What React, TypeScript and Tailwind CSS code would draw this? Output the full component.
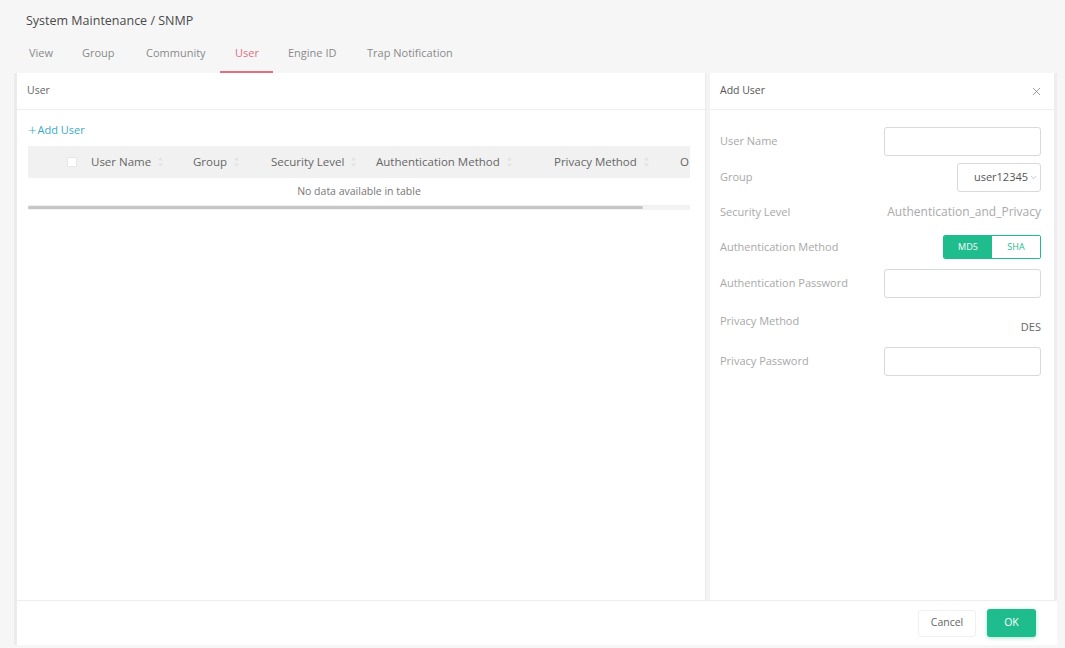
import { X, ChevronDown } from "lucide-react";

const tabs = [
  { name: "View", w: "w-[53px]" },
  { name: "Group", w: "w-[64px]" },
  { name: "Community", w: "w-[74px]" },
  { name: "User", w: "w-[53px] mr-[15px]" },
  { name: "Engine ID", w: "w-[79px]" },
  { name: "Trap Notification", w: "" },
];

const columns = [
  { name: "User Name", w: "w-[102px]" },
  { name: "Group", w: "w-[78px]" },
  { name: "Security Level", w: "w-[105px]" },
  { name: "Authentication Method", w: "w-[178px]" },
  { name: "Privacy Method", w: "w-[126px]" },
];

const SortIcon = () => (
  <svg width="5" height="10" viewBox="0 0 5 10" className="ml-[7px]">
    <path d="M2.5 0 L5 3.5 H0 Z" fill="#e3e3e3" />
    <path d="M2.5 10 L5 6.5 H0 Z" fill="#e3e3e3" />
  </svg>
);

const Input = ({ w = "w-[157px]" }: { w?: string }) => (
  <div className={`${w} h-[29px] rounded-[3px] border border-[#d9d9d9] bg-white`} />
);

const App = () => {
  return (
    <div
      className="w-[1065px] h-[648px] bg-[#f6f6f7] flex flex-col overflow-hidden text-[#333]"
      style={{ fontFamily: "'Open Sans', 'Liberation Sans', Arial, sans-serif" }}
    >
      {/* header */}
      <div className="pl-[26px] pt-[12px]">
        <div className="text-[12.5px] text-[#4a4a4a] leading-[18px]">System Maintenance / SNMP</div>
        <div className="flex mt-[15px] pl-[3px] text-[11px] text-[#8a8a8a] leading-[16px]">
          {tabs.map((t) => (
            <div
              key={t.name}
              className={`${t.w} h-[28px] flex items-start border-b-2 ${
                t.name === "User" ? "text-[#e0707e] border-[#e0707e] pl-[15px]" : "border-transparent"
              }`}
            >
              {t.name}
            </div>
          ))}
        </div>
      </div>

      {/* body */}
      <div className="flex-1 ml-[14px] mr-[8px] mb-[3px] flex flex-col bg-white border-l-[3px] border-[#ececec]">
        <div className="flex-1 flex">
          {/* left card */}
          <div className="w-[689px] flex flex-col border-r border-[#ebebeb]">
            <div className="h-[37px] flex items-center pl-[10px] text-[10.5px] text-[#666] border-b border-[#efefef]">
              User
            </div>
            <div className="px-[11px] pt-[13px]">
              <div className="flex items-center text-[11px] text-[#3aa9c8] h-[14px]">
                <span className="text-[15px] leading-none mr-[1px] font-light">+</span>Add User
              </div>
              <div className="mt-[9px] w-[662px] overflow-hidden">
                <div className="h-[32px] bg-[#f1f1f1] flex items-center text-[11.5px] text-[#666] whitespace-nowrap">
                  <div className="w-[39px]" />
                  <div className="w-[10px] h-[10px] bg-white border border-[#e6e6e6] mr-[14px]" />
                  {columns.map((c) => (
                    <div key={c.name} className={`${c.w} shrink-0 flex items-center`}>
                      {c.name}
                      <SortIcon />
                    </div>
                  ))}
                  <div className="shrink-0">O</div>
                </div>
                <div className="h-[28px] flex items-center justify-center text-[10.5px] text-[#777] border-b border-[#f0f0f0]">
                  No data available in table
                </div>
                <div className="h-[4px] bg-[#f3f3f3]">
                  <div className="w-[615px] h-[3px] bg-[#c6c6c6] rounded-full" />
                </div>
              </div>
            </div>
          </div>

          {/* gap */}
          <div className="w-[4px] bg-[#f4f4f4]" />

          {/* right drawer */}
          <div className="flex-1 flex flex-col border-r-[3px] border-[#eeeeee]">
            <div className="h-[37px] flex items-center justify-between pl-[10px] pr-[11px] text-[10.5px] text-[#555] border-b border-[#efefef]">
              Add User
              <X size={13} strokeWidth={1.5} className="text-[#888]" />
            </div>
            <div className="pl-[10px] pr-[13px] pt-[17px] text-[11px] text-[#a8a8a8]">
              <div className="flex items-center justify-between h-[29px]">
                <span>User Name</span>
                <Input />
              </div>
              <div className="flex items-center justify-between h-[29px] mt-[7px]">
                <span>Group</span>
                <div className="w-[84px] h-[29px] rounded-[3px] border border-[#d9d9d9] flex items-center justify-end pr-[2px] text-[11px] text-[#555]">
                  user12345
                  <ChevronDown size={9} strokeWidth={1.5} className="text-[#999] ml-[1px]" />
                </div>
              </div>
              <div className="flex items-center justify-between h-[20px] mt-[10px]">
                <span>Security Level</span>
                <span className="text-[12px] text-[#aaa]">Authentication_and_Privacy</span>
              </div>
              <div className="flex items-center justify-between h-[24px] mt-[13px]">
                <span>Authentication Method</span>
                <div className="flex h-[24px] text-[9px] rounded-[2px] overflow-hidden border border-[#1fbc8e]">
                  <div className="w-[48px] bg-[#1fbc8e] text-white flex items-center justify-center">MD5</div>
                  <div className="w-[48px] bg-white text-[#1fbc8e] flex items-center justify-center">SHA</div>
                </div>
              </div>
              <div className="flex items-center justify-between h-[29px] mt-[10px]">
                <span>Authentication Password</span>
                <Input />
              </div>
              <div className="flex justify-between h-[28px] mt-[14px] leading-[16px]">
                <span className="pt-[1px]">Privacy Method</span>
                <span className="pt-[7px] text-[11px] text-[#666]">DES</span>
              </div>
              <div className="flex items-center justify-between h-[29px] mt-[7px]">
                <span>Privacy Password</span>
                <Input />
              </div>
            </div>
          </div>
        </div>

        {/* footer */}
        <div className="h-[45px] border-t border-[#eeeeee] flex items-center justify-end pr-[21px] gap-[11px] text-[10.5px]">
          <button className="h-[27px] w-[58px] rounded-[3px] border border-[#f0f0f0] text-[#666]">Cancel</button>
          <button className="h-[28px] w-[49px] rounded-[3px] bg-[#1fbc8e] text-white shadow-[0_1px_4px_rgba(31,188,142,0.4)]">OK</button>
        </div>
      </div>
    </div>
  );
};

export default App;
